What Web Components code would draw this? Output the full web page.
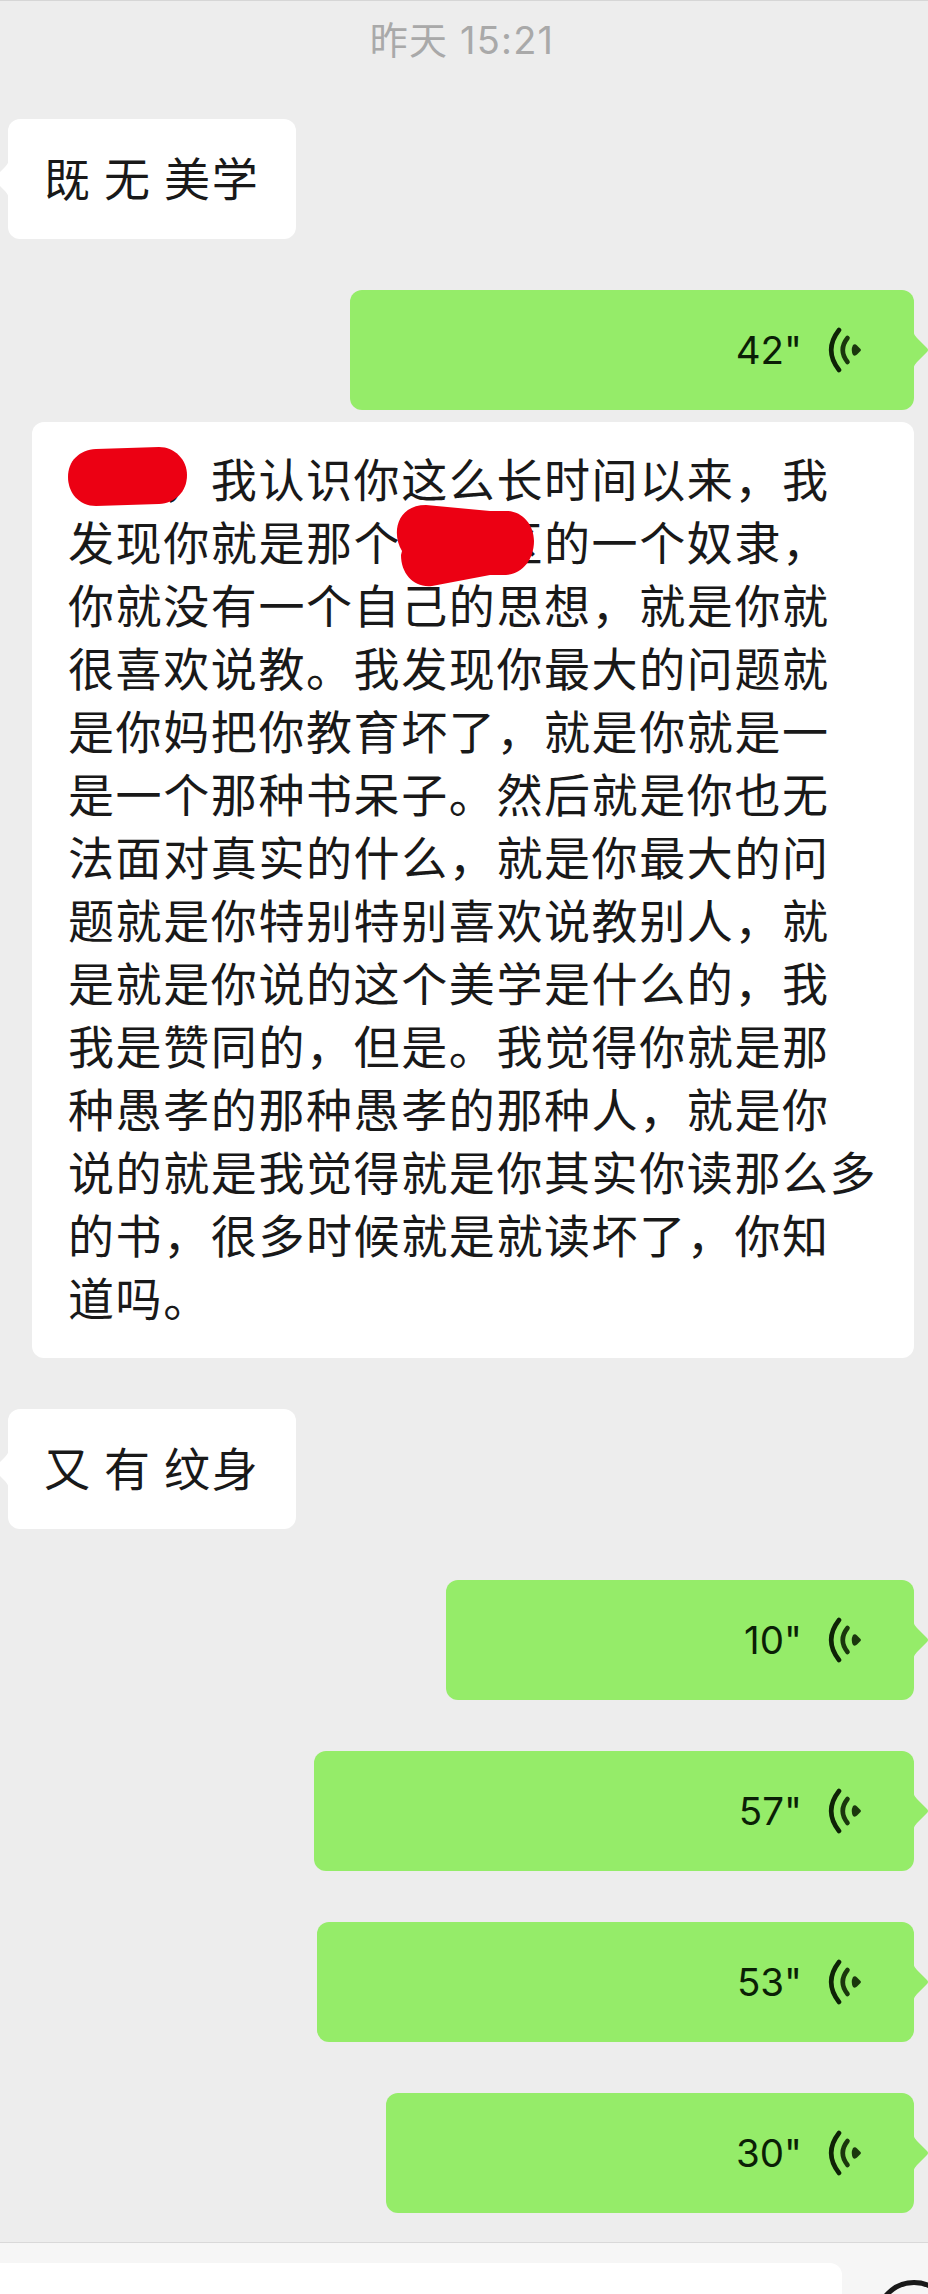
<!DOCTYPE html>
<html lang="zh-CN">
<head>
  <meta charset="UTF-8">
  <title>聊天</title>
  <style>
    body {
      margin: 0;
      background: #ededed;
      font-family: Inter, "Noto Sans CJK SC", sans-serif;
      color: #191919;
    }
  </style>
</head>
<body>
  <chat-screen>
    <chat-time>昨天 15:21</chat-time>
    <text-message>既 无 美学</text-message>
    <voice-message seconds="42" width="564"></voice-message>
    <voice-transcript>　　，我认识你这么长时间以来，我
发现你就是那个　　区的一个奴隶，
你就没有一个自己的思想，就是你就
很喜欢说教。我发现你最大的问题就
是你妈把你教育坏了，就是你就是一
是一个那种书呆子。然后就是你也无
法面对真实的什么，就是你最大的问
题就是你特别特别喜欢说教别人，就
是就是你说的这个美学是什么的，我
我是赞同的，但是。我觉得你就是那
种愚孝的那种愚孝的那种人，就是你
说的就是我觉得就是你其实你读那么多
的书，很多时候就是就读坏了，你知
道吗。</voice-transcript>
    <text-message>又 有 纹身</text-message>
    <voice-message seconds="10" width="468"></voice-message>
    <voice-message seconds="57" width="600"></voice-message>
    <voice-message seconds="53" width="597"></voice-message>
    <voice-message seconds="30" width="528"></voice-message>
    <chat-input slot="footer"></chat-input>
  </chat-screen>

  <script>
    class ChatScreen extends HTMLElement {

      constructor() {

        super();
        this.attachShadow({ mode: 'open' });
      }

      connectedCallback() {

        this.shadowRoot.innerHTML = `
          <style>
            :host {
              box-sizing: border-box;
              width: 928px;
              height: 2294px;
              display: flex;
              flex-direction: column;
              justify-content: space-between;
              overflow: hidden;
              border-top: 1px solid #d6d6d6;
            }

            main {
              display: flex;
              flex-direction: column;
              align-items: flex-start;
              gap: 51px;
            }
          </style>
          <main><slot></slot></main>
          <slot name="footer"></slot>
        `;
      }
    }

    class ChatTime extends HTMLElement {

      constructor() {

        super();
        this.attachShadow({ mode: 'open' });
      }

      connectedCallback() {

        this.shadowRoot.innerHTML = `
          <style>
            :host {
              display: block;
              height: 46px;
              padding: 16px 0 5px;
              align-self: center;
              margin-right: 4px;
              font-size: 38px;
              line-height: 46px;
              letter-spacing: 1.2px;
              color: #a9a9a9;
              white-space: nowrap;
            }
          </style>
          <slot></slot>
        `;
      }
    }

    class TextMessage extends HTMLElement {

      constructor() {

        super();
        this.attachShadow({ mode: 'open' });
      }

      connectedCallback() {

        this.shadowRoot.innerHTML = `
          <style>
            :host {
              box-sizing: border-box;
              position: relative;
              display: flex;
              align-items: center;
              width: 288px;
              height: 120px;
              margin-left: 8px;
              padding: 0 0 6px 36px;
              border-radius: 12px;
              background: #fff;
              font-size: 46px;
              letter-spacing: 1.8px;
              word-spacing: -2.5px;
              white-space: nowrap;
            }

            .tail {
              position: absolute;
              left: -14px;
              top: 41px;
              width: 15px;
              height: 38px;
              fill: #fff;
            }
          </style>
          <svg class="tail" viewBox="0 0 15 38"><path d="M15 0Q14 4 11 7L2 16Q0 19 2 22L11 31Q14 34 15 38Z"/></svg>
          <slot></slot>
        `;
      }
    }

    class VoiceMessage extends HTMLElement {

      constructor() {

        super();
        this.attachShadow({ mode: 'open' });
      }

      connectedCallback() {

        this.shadowRoot.innerHTML = `
          <style>
            :host {
              box-sizing: border-box;
              position: relative;
              display: flex;
              align-items: center;
              justify-content: flex-end;
              gap: 26px;
              width: ${this.getAttribute('width')}px;
              height: 120px;
              align-self: flex-end;
              margin-right: 14px;
              padding-right: 52px;
              border-radius: 12px;
              background: #95ec69;
              font-size: 38.5px;
              color: #0b1f06;
            }

            .waves {
              width: 34px;
              height: 46px;
              fill: none;
              stroke: #0e2206;
              stroke-width: 4.6;
              stroke-linecap: round;
            }

            .tail {
              position: absolute;
              right: -15px;
              top: 41px;
              width: 16px;
              height: 38px;
              fill: #95ec69;
            }
          </style>
          <span>${this.getAttribute('seconds')}"</span>
          <svg class="waves" viewBox="0 0 34 46">
            <path d="M11 3Q-4.600 23 11 43"/>
            <path d="M19.5 11Q10 23 19.500 35" stroke="#1b370d"/>
            <path d="M25 18Q27 16.500 29 18.500L32.500 22Q33.500 23 32.500 24L29 27.500Q27 29.500 25 28Q22.500 23 25 18Z" fill="#1b370d" stroke="none"/>
          </svg>
          <svg class="tail" viewBox="0 0 16 38"><path d="M0 0Q1 4 4 7L14 17Q16 19 14 21L4 31Q1 34 0 38Z"/></svg>
        `;
      }
    }

    class VoiceTranscript extends HTMLElement {

      constructor() {

        super();
        this.attachShadow({ mode: 'open' });
      }

      connectedCallback() {

        this.shadowRoot.innerHTML = `
          <style>
            :host {
              box-sizing: border-box;
              position: relative;
              display: block;
              width: 882px;
              height: 936px;
              margin: -39px 0 0 32px;
              padding: 24px 0 30px 36px;
              border-radius: 12px;
              background: #fff;
              font-family: "Noto Sans CJK SC", sans-serif;
              font-size: 46px;
              line-height: 63px;
              letter-spacing: 1.6px;
            }

            .text {
              white-space: pre;
            }

            /* marker strokes over the names */
            .marker {
              position: absolute;
              left: 0;
              top: 0;
              width: 882px;
              height: 200px;
              fill: #ec0013;
            }
          </style>
          <div class="text"><slot></slot></div>
          <svg class="marker" viewBox="0 0 882 200">
            <path d="M64 27L127 25C143 25 155 38 155 53C155 70 143 81 127 82L64 84C47 84 36 71 36 55C36 39 47 28 64 27Z"/>
            <path d="M394 83L458 89L476 89C491 90 502 103 502 119C502 138 490 152 474 153L458 153L400 164C382 166 369 152 369 133L370 129C359 111 365 83 394 83Z"/>
          </svg>
        `;
      }
    }

    class ChatInput extends HTMLElement {

      constructor() {

        super();
        this.attachShadow({ mode: 'open' });
      }

      connectedCallback() {

        this.shadowRoot.innerHTML = `
          <style>
            :host {
              box-sizing: border-box;
              display: flex;
              justify-content: space-between;
              height: 52px;
              padding-top: 20px;
              border-top: 1px solid #d9d9d9;
              background: #f6f6f6;
            }

            .field {
              width: 842px;
              border-radius: 0 12px 0 0;
              background: #fff;
            }

            svg {
              width: 53px;
              height: 31px;
            }
          </style>
          <div class="field"></div>
          <svg viewBox="0 0 53 31"><circle cx="39" cy="56" r="36.500" fill="none" stroke="#191919" stroke-width="5"/></svg>
        `;
      }
    }

    customElements.define('chat-screen', ChatScreen);
    customElements.define('chat-time', ChatTime);
    customElements.define('text-message', TextMessage);
    customElements.define('voice-message', VoiceMessage);
    customElements.define('voice-transcript', VoiceTranscript);
    customElements.define('chat-input', ChatInput);
  </script>
</body>
</html>
